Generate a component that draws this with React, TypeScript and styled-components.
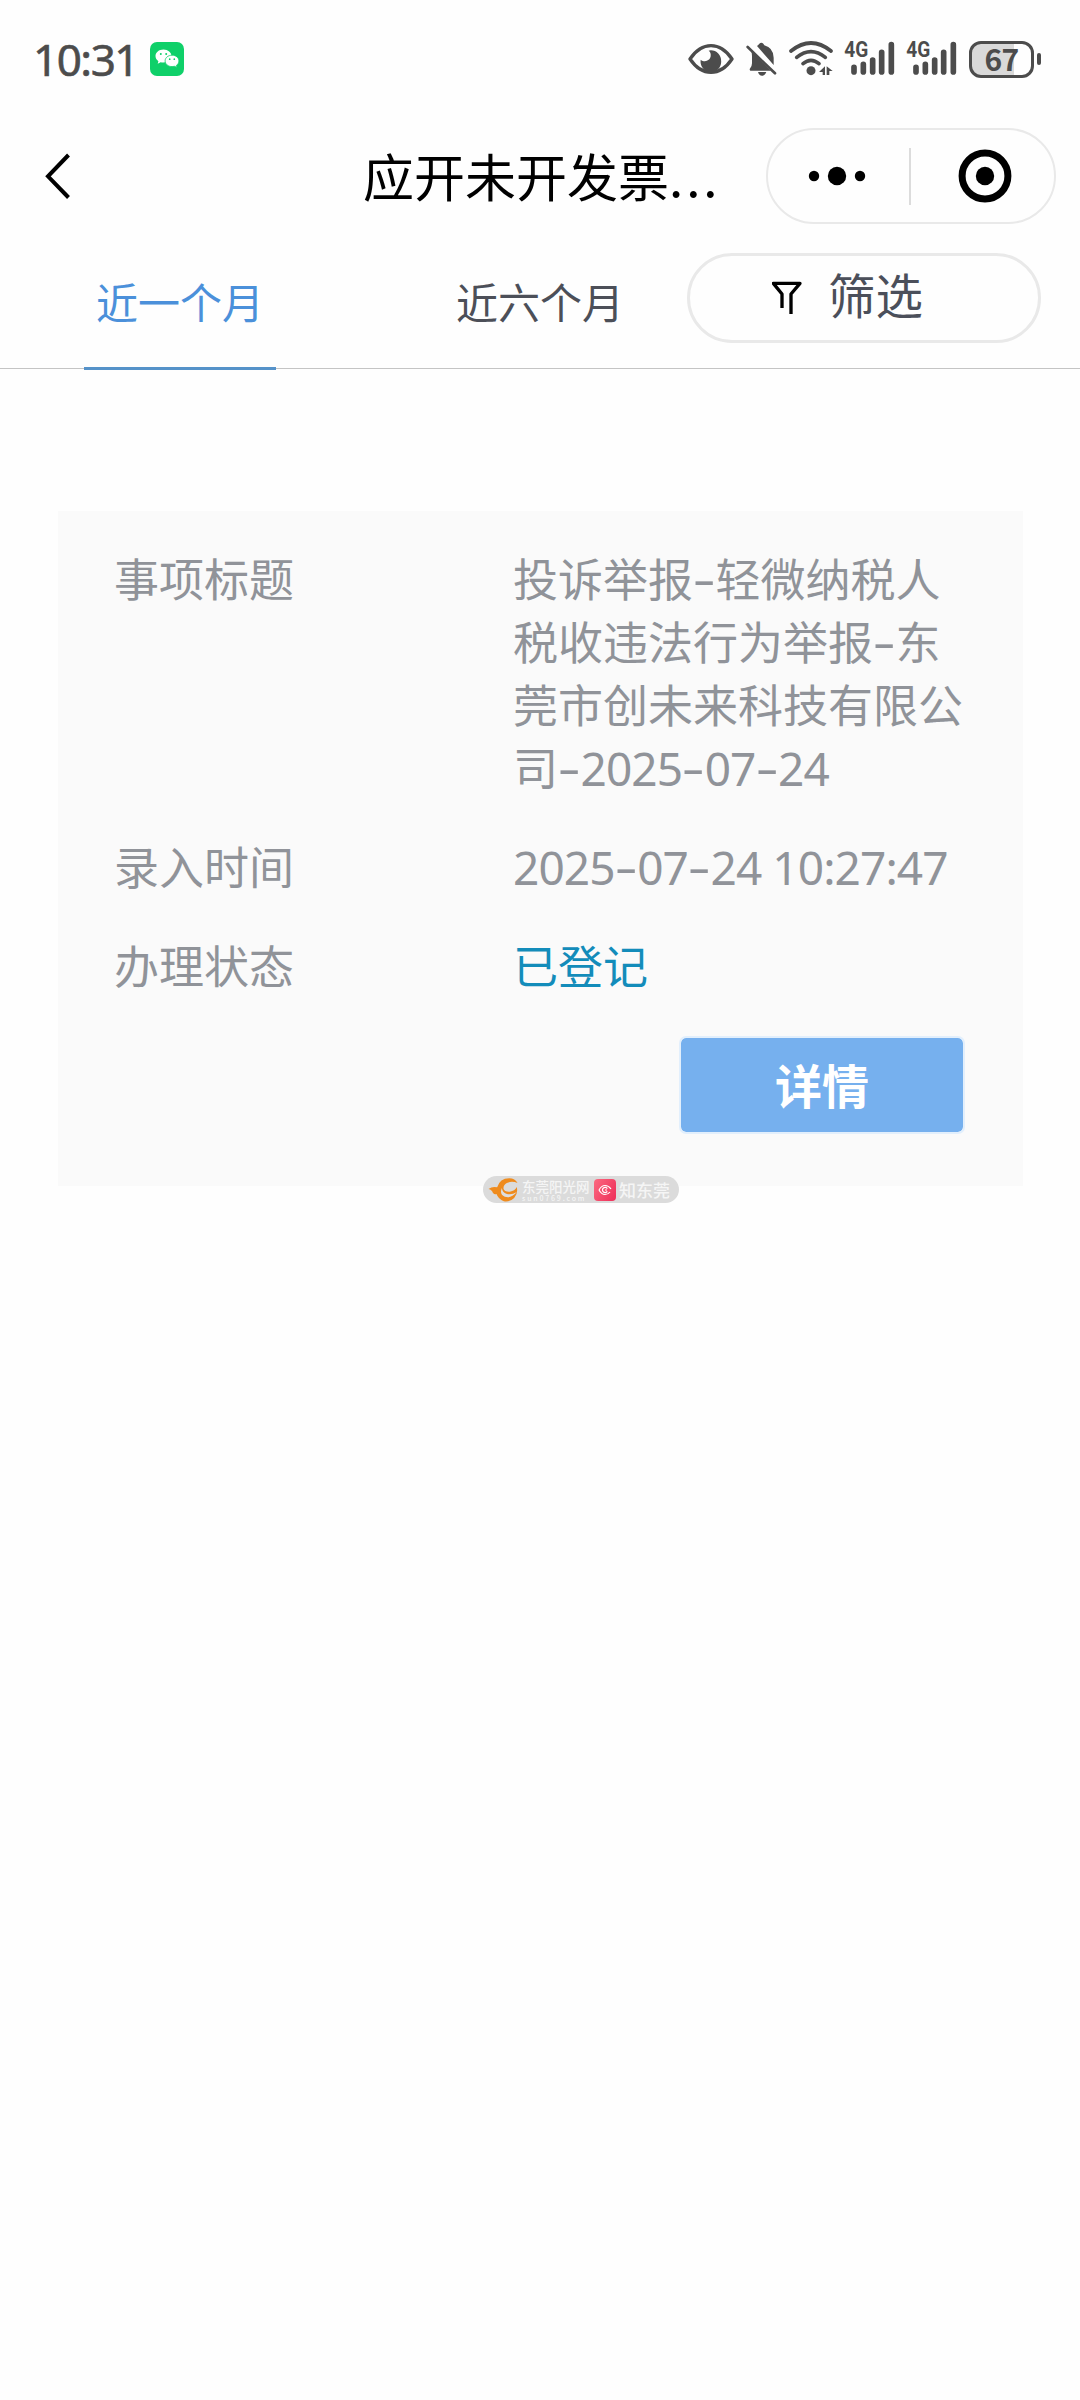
import React from "react";
import styled, { createGlobalStyle } from "styled-components";

const GlobalStyle = createGlobalStyle`
  * { box-sizing: border-box; }
  body {
    margin: 0;
    background: #fefefe;
    font-family: "Noto Sans CJK SC", "Noto Sans", sans-serif;
  }
  svg { display: block; flex: none; }
`;

const Page = styled.div`
  width: 1080px;
  height: 2400px;
  overflow: hidden;
  background: #fefefe;
`;

const StatusBar = styled.header`
  display: flex;
  align-items: center;
  justify-content: space-between;
  height: 118px;
  padding: 0 39px 0 33px;
`;

const StatusLeft = styled.div`
  display: flex;
  align-items: center;
  gap: 15px;
`;

const Clock = styled.span`
  width: 102px;
  font-family: "Noto Sans", sans-serif;
  font-size: 44px;
  line-height: 60px;
  letter-spacing: -1.5px;
  white-space: nowrap;
  color: #4c4c4c;
  -webkit-text-stroke: 0.6px #4c4c4c;
`;

const StatusIcons = styled.div`
  display: flex;
  align-items: center;
`;

const IconSlot = styled.span<{ $before?: number }>`
  display: flex;
  margin-left: ${(p) => p.$before ?? 12}px;
`;

const Battery = styled.span`
  display: flex;
  align-items: center;
  gap: 3px;
  margin-left: 12px;
`;

const BatteryBody = styled.span`
  display: flex;
  align-items: center;
  justify-content: center;
  width: 65px;
  height: 37px;
  padding-bottom: 3px;
  border: 3px solid #4c4c4c;
  border-radius: 12px;
  background: linear-gradient(90deg, #d9d9d9 0 42px, #fefefe 42px);
  color: #4c4c4c;
  font-size: 30px;
  line-height: 30px;
  font-weight: 700;
  letter-spacing: -0.8px;
`;

const BatteryNub = styled.span`
  width: 4px;
  height: 12px;
  border-radius: 2px;
  background: #4c4c4c;
`;

const NavBar = styled.nav`
  display: flex;
  align-items: center;
  height: 116px;
  padding: 0 24px 0 44px;
`;

const BackButton = styled.button`
  display: flex;
  width: 319px;
  padding: 0;
  border: 0;
  background: none;
`;

const Title = styled.h1`
  width: 403px;
  margin: -3px 0 0;
  font-size: 51px;
  line-height: 74px;
  font-weight: 400;
  white-space: nowrap;
  color: #000;
`;

const Dots = styled.span`
  letter-spacing: 3px;
`;

const Capsule = styled.div`
  display: flex;
  align-items: center;
  width: 290px;
  height: 96px;
  border: 2px solid #e9e9e9;
  border-radius: 48px;
`;

const CapsuleHalf = styled.span<{ $shift: number }>`
  display: flex;
  flex: 1 1 0;
  justify-content: center;
  padding-left: ${(p) => Math.max(p.$shift, 0)}px;
  padding-right: ${(p) => Math.max(-p.$shift, 0)}px;
`;

const CapsuleDivider = styled.span`
  width: 2px;
  height: 57px;
  margin-left: 2px;
  background: #dcdcdc;
`;

const TabBar = styled.div`
  display: flex;
  height: 135px;
  padding-top: 19px;
  background: linear-gradient(#c4c4c4, #c4c4c4) 0 134px / 100% 1px no-repeat;
`;

const Tab = styled.div<{ $active?: boolean }>`
  display: flex;
  flex-direction: column;
  align-items: center;
  width: ${(p) => (p.$active ? 360 : 327)}px;
  height: 118px;
  padding: 18px 0 0 ${(p) => (p.$active ? 0 : 33)}px;
  font-size: 42px;
  line-height: 60px;
  white-space: nowrap;
  color: ${(p) => (p.$active ? "#4b90da" : "#4c4f58")};
`;

const TabLine = styled.span`
  width: 192px;
  height: 3px;
  margin-top: 36px;
  background: #5592c9;
`;

const FilterButton = styled.button`
  display: flex;
  align-items: center;
  gap: 26px;
  width: 354px;
  height: 90px;
  padding: 0 0 0 82px;
  border: 3px solid #e9e9e9;
  border-radius: 45px;
  background: #fefefe;
  color: #4b4f5a;
  font-family: inherit;
  font-size: 47.5px;
  line-height: 60px;
`;

const FilterLabel = styled.span`
  margin-top: -8px;
`;

const Card = styled.section`
  position: relative;
  display: flex;
  flex-direction: column;
  gap: 36px;
  width: 965px;
  height: 675px;
  margin: 142px 0 0 58px;
  padding: 35px 58px 0 56px;
  background: #fafafa;
`;

const Row = styled.div`
  display: flex;
  font-size: 45px;
  line-height: 63px;
  color: #909399;
`;

const Label = styled.span`
  width: 399px;
`;

const Value = styled.span<{ $color?: string }>`
  flex: 1;
  white-space: nowrap;
  color: ${(p) => p.$color ?? "inherit"};
`;

const Line = styled.span`
  display: block;
  height: 63px;
`;

const Dash = styled.span`
  display: inline-block;
  width: 22.5px;
  line-height: 1;
  text-align: center;
  font-family: Inter, sans-serif;
  transform: scaleX(1.2);
`;

const Digits = styled.span`
  font-family: "Noto Sans", sans-serif;
  font-size: 46px;
  line-height: 1;
  letter-spacing: -0.9px;
`;

const Actions = styled.div`
  display: flex;
  justify-content: flex-end;
  padding-top: 4px;
`;

const DetailButton = styled.button`
  width: 286px;
  height: 98px;
  padding: 0 0 3px;
  border: 2px solid #e2effc;
  border-radius: 7px;
  background: #76b0ee;
  background-clip: padding-box;
  color: #fff;
  font-family: inherit;
  font-size: 47px;
  line-height: 60px;
  font-weight: 700;
`;

const Watermark = styled.div`
  position: absolute;
  left: 425px;
  top: 665px;
  display: flex;
  align-items: center;
  width: 196px;
  height: 27px;
  padding-left: 5px;
  border-radius: 14px;
  background: #dbdbdb;
`;

const Brand = styled.span<{ $width: number }>`
  display: flex;
  flex-direction: column;
  width: ${(p) => p.$width}px;
  margin-left: 3px;
  color: #f5f5f5;
  font-size: ${(p) => (p.$width > 60 ? 13.5 : 17)}px;
  line-height: 16px;
  font-weight: 500;
  white-space: nowrap;
`;

const BrandSub = styled.small`
  font-size: 7px;
  line-height: 8px;
  letter-spacing: 1.8px;
`;

const AppBadge = styled.span`
  display: flex;
  align-items: center;
  justify-content: center;
  width: 22px;
  height: 22px;
  margin-left: 3px;
  border-radius: 4px;
  background: linear-gradient(120deg, #fb6a80, #ee2c58);
`;

const INK = "#4c4c4c";

const WeChatIcon = () => (
  <svg width="34" height="34" viewBox="0 0 34 34">
    <rect width="34" height="34" rx="7" fill="#0fd069" />
    <path d="M13.5 7.5c-4.600 0-8 2.900-8 6.600 0 2.100 1.100 3.900 2.900 5.100l-.7 2.500 2.900-1.500c.9.3 1.900.4 2.900.4 4.500 0 8-2.900 8-6.500s-3.500-6.600-8-6.600z" fill="#fff" />
    <path d="M22.100 13.200c-4 0-7 2.600-7 5.700s3 5.700 7 5.700c.9 0 1.700-.1 2.500-.3l2.400 1.200-.6-2.100c1.600-1.100 2.500-2.700 2.500-4.500 0-3.100-2.900-5.700-6.800-5.700z" fill="#fff" stroke="#0fd069" strokeWidth=".8" />
    <g fill="#0fd069">
      <circle cx="10.8" cy="12" r="1" />
      <circle cx="16.2" cy="12" r="1" />
      <circle cx="19.7" cy="17.2" r=".85" />
      <circle cx="24.3" cy="17.2" r=".85" />
    </g>
  </svg>
);

const EyeIcon = () => (
  <svg width="46" height="36" viewBox="57 61 138 108">
    <path d="M63 115Q90 75 126 75Q162 75 189 115Q162 155 126 155Q90 155 63 115Z" fill="none" stroke={INK} strokeWidth="10" strokeLinejoin="round" />
    <path d="M125 89a31 33 0 1 1 -30 28c11 9 28 4 30-10c1-8-1-14-6-17z" fill={INK} />
  </svg>
);

const BellOffIcon = () => (
  <svg width="31" height="36" viewBox="230 61 93 108">
    <path d="M263 76q4-3 7-7q6-5 12 0l3 5q27 7 28 37v22z" fill={INK} />
    <path d="M246 92L304 150H243q-4-3 0-8q5-7 5-14v-22q0-8-2-14z" fill={INK} />
    <path d="M266 154h25q-4 11-13 11t-12-11z" fill={INK} />
    <path d="M235 79L317 158" stroke={INK} strokeWidth="8" strokeLinecap="round" />
  </svg>
);

const WifiIcon = () => (
  <svg width="44" height="36" viewBox="357 61 132 108">
    <g fill="none" stroke={INK} strokeWidth="11" strokeLinecap="round">
      <path d="M363 91Q423 43 483 91" />
      <path d="M380 110Q423 76 466 110" />
      <path d="M399 129Q423 109 447 129" />
    </g>
    <circle cx="423" cy="150" r="13.500" fill={INK} />
    <path d="M447 154L465 137V163H458V154ZM470 137L488 151H478V163H470Z" fill={INK} />
  </svg>
);

const SignalIcon = () => (
  <svg width="51" height="42" viewBox="525 52 153 126">
    <text x="526" y="110" fontSize="64" fontFamily="Roboto, sans-serif" fontWeight="700" fill={INK} textLength="72" lengthAdjust="spacingAndGlyphs">4G</text>
    <g stroke={INK} strokeWidth="17" strokeLinecap="round">
      <path d="M555 140V154M583 131V154M611 118V154M638 95V154M667 72V154" />
    </g>
  </svg>
);

const BackIcon = () => (
  <svg width="30" height="50" viewBox="44 151 30 50">
    <path d="M68.5 155L48 176.3L68.5 197.5" fill="none" stroke="#000" strokeWidth="4" />
  </svg>
);

const MoreIcon = () => (
  <svg width="60" height="20" viewBox="0 0 60 20">
    <circle cx="7" cy="10" r="5.2" />
    <circle cx="30" cy="10" r="9.2" />
    <circle cx="53" cy="10" r="5.2" />
  </svg>
);

const TargetIcon = () => (
  <svg width="54" height="54" viewBox="0 0 54 54">
    <circle cx="27" cy="27" r="22.9" fill="none" stroke="#000" strokeWidth="7" />
    <circle cx="27" cy="27" r="9.2" />
  </svg>
);

const FunnelIcon = () => (
  <svg width="30" height="34" viewBox="336 124 90 102">
    <path d="M366 205V163L340 131H420L393 163V223" fill="none" stroke="#000" strokeWidth="10" strokeLinejoin="round" />
  </svg>
);

const SunLogo = () => (
  <svg width="31" height="24" viewBox="46 28 90 72">
    <path d="M46 61Q58 52 72 56Q80 29 108 29Q126 29 133 43Q116 36 101 43Q90 49 91 60Q94 70 110 69Q125 67 131 55Q135 75 123 88Q110 101 92 98Q76 92 70 76Q64 79 59 72Q57 64 46 61Z" fill="#ef8b1d" />
    <path d="M86 58Q78 78 95 84Q115 90 130 71Q114 80 99 75Q87 70 86 58Z" fill="#dedede" />
  </svg>
);

const EyeBadgeIcon = () => (
  <svg width="14" height="12" viewBox="0 0 14 12" fill="none" stroke="#fff" strokeWidth="1.2">
    <path d="M1 6Q3.5 1.5 7 1.5T13 5M1 6Q3.5 10.5 7 10.5Q10 10.5 12 8" />
    <path d="M9.3 4.6A2.6 2.6 0 1 0 9.3 7.4M7 6H9" />
  </svg>
);

const titleLines: string[] = [
  "投诉举报-轻微纳税人",
  "税收违法行为举报-东",
  "莞市创未来科技有限公",
  "司-2025-07-24",
];

const Dashed = ({ text }: { text: string }) => (
  <>
    {text.split("-").map((part, i) => (
      <React.Fragment key={i}>
        {i > 0 && <Dash>-</Dash>}
        {/\d/.test(part) ? <Digits>{part}</Digits> : part}
      </React.Fragment>
    ))}
  </>
);

export default function App() {
  return (
    <Page>
      <GlobalStyle />
      <StatusBar>
        <StatusLeft>
          <Clock>10:31</Clock>
          <WeChatIcon />
        </StatusLeft>
        <StatusIcons>
          <IconSlot><EyeIcon /></IconSlot>
          <IconSlot><BellOffIcon /></IconSlot>
          <IconSlot><WifiIcon /></IconSlot>
          <IconSlot $before={11}><SignalIcon /></IconSlot>
          <IconSlot $before={11}><SignalIcon /></IconSlot>
          <Battery>
            <BatteryBody>67</BatteryBody>
            <BatteryNub />
          </Battery>
        </StatusIcons>
      </StatusBar>

      <NavBar>
        <BackButton aria-label="返回"><BackIcon /></BackButton>
        <Title>应开未开发票<Dots>...</Dots></Title>
        <Capsule>
          <CapsuleHalf $shift={-1}><MoreIcon /></CapsuleHalf>
          <CapsuleDivider />
          <CapsuleHalf $shift={5}><TargetIcon /></CapsuleHalf>
        </Capsule>
      </NavBar>

      <TabBar>
        <Tab $active>
          近一个月
          <TabLine />
        </Tab>
        <Tab>近六个月</Tab>
        <FilterButton>
          <FunnelIcon />
          <FilterLabel>筛选</FilterLabel>
        </FilterButton>
      </TabBar>

      <Card>
        <Row>
          <Label>事项标题</Label>
          <Value>
            {titleLines.map((line) => (
              <Line key={line}><Dashed text={line} /></Line>
            ))}
          </Value>
        </Row>
        <Row>
          <Label>录入时间</Label>
          <Value><Dashed text="2025-07-24 10:27:47" /></Value>
        </Row>
        <Row>
          <Label>办理状态</Label>
          <Value $color="#138cba">已登记</Value>
        </Row>
        <Actions>
          <DetailButton>详情</DetailButton>
        </Actions>
        <Watermark>
          <SunLogo />
          <Brand $width={69}>
            东莞阳光网
            <BrandSub>sun0769.com</BrandSub>
          </Brand>
          <AppBadge><EyeBadgeIcon /></AppBadge>
          <Brand $width={52}>知东莞</Brand>
        </Watermark>
      </Card>
    </Page>
  );
}
